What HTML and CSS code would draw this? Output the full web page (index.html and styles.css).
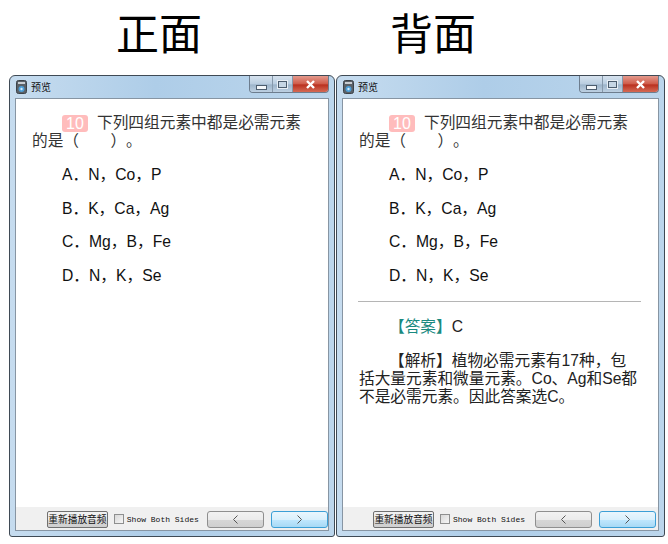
FILE: index.html
```html
<!DOCTYPE html>
<html lang="zh-CN">
<head>
    <meta charset="UTF-8">
    <meta name="viewport" content="width=device-width, initial-scale=1.0">
    <title>预览 - 正面 / 背面</title>
    <link rel="stylesheet" href="styles.css">
</head>
<body>
    <div class="page">
        <section class="column">
            <h1>正面</h1>
            <div class="window">
                <div class="titlebar">
                    <svg class="app-icon" width="11" height="14" viewBox="0 0 11 14">
                        <rect x="0.5" y="0.5" width="10" height="13" rx="2" fill="#5a6168" stroke="#3c4248"/>
                        <rect x="2" y="2" width="7" height="2" fill="#c9ced3"/>
                        <circle cx="5.5" cy="9" r="3" fill="#4d9fd8"/>
                        <circle cx="5.5" cy="9" r="1.2" fill="#d5ecfb"/>
                    </svg>
                    <span class="window-name">预览</span>
                    <div class="controls">
                        <div class="ctl ctl-min"><span class="glyph-min"></span></div>
                        <div class="ctl ctl-max"><span class="glyph-max"></span></div>
                        <div class="ctl ctl-close">
                            <svg width="11" height="9" viewBox="0 0 11 9"><path d="M2 1 L9 8 M9 1 L2 8" stroke="#fff" stroke-width="2.4"/></svg>
                        </div>
                    </div>
                </div>
                <div class="client">
                    <div class="content">
                        <div class="question">
                            <div class="question-head"><span class="badge">10</span><span>下列四组元素中都是必需元素</span></div>
                            <div>的是（　　）。</div>
                        </div>
                        <ul class="options">
                            <li>A．N，Co，P</li>
                            <li>B．K，Ca，Ag</li>
                            <li>C．Mg，B，Fe</li>
                            <li>D．N，K，Se</li>
                        </ul>
                    </div>
                    <div class="footer">
                        <button class="btn-replay">重新播放音频</button>
                        <label class="both"><span class="check"></span>Show Both Sides</label>
                        <button class="btn-nav"><svg width="7" height="9" viewBox="0 0 7 9"><path d="M5.5 0.5 L1.5 4.5 L5.5 8.5" fill="none" stroke="#555"/></svg></button>
                        <button class="btn-nav btn-next"><svg width="7" height="9" viewBox="0 0 7 9"><path d="M1.5 0.5 L5.5 4.5 L1.5 8.5" fill="none" stroke="#555"/></svg></button>
                    </div>
                </div>
            </div>
        </section>

        <section class="column column-back">
            <h1>背面</h1>
            <div class="window">
                <div class="titlebar">
                    <svg class="app-icon" width="11" height="14" viewBox="0 0 11 14">
                        <rect x="0.5" y="0.5" width="10" height="13" rx="2" fill="#5a6168" stroke="#3c4248"/>
                        <rect x="2" y="2" width="7" height="2" fill="#c9ced3"/>
                        <circle cx="5.5" cy="9" r="3" fill="#4d9fd8"/>
                        <circle cx="5.5" cy="9" r="1.2" fill="#d5ecfb"/>
                    </svg>
                    <span class="window-name">预览</span>
                    <div class="controls">
                        <div class="ctl ctl-min"><span class="glyph-min"></span></div>
                        <div class="ctl ctl-max"><span class="glyph-max"></span></div>
                        <div class="ctl ctl-close">
                            <svg width="11" height="9" viewBox="0 0 11 9"><path d="M2 1 L9 8 M9 1 L2 8" stroke="#fff" stroke-width="2.4"/></svg>
                        </div>
                    </div>
                </div>
                <div class="client">
                    <div class="content">
                        <div class="question">
                            <div class="question-head"><span class="badge">10</span><span>下列四组元素中都是必需元素</span></div>
                            <div>的是（　　）。</div>
                        </div>
                        <ul class="options">
                            <li>A．N，Co，P</li>
                            <li>B．K，Ca，Ag</li>
                            <li>C．Mg，B，Fe</li>
                            <li>D．N，K，Se</li>
                        </ul>
                        <hr class="divider">
                        <p class="answer"><span class="answer-label">【答案】</span>C</p>
                        <p class="analysis">【解析】植物必需元素有17种，包括大量元素和微量元素。Co、Ag和Se都不是必需元素。因此答案选C。</p>
                    </div>
                    <div class="footer">
                        <button class="btn-replay">重新播放音频</button>
                        <label class="both"><span class="check"></span>Show Both Sides</label>
                        <button class="btn-nav"><svg width="7" height="9" viewBox="0 0 7 9"><path d="M5.5 0.5 L1.5 4.5 L5.5 8.5" fill="none" stroke="#555"/></svg></button>
                        <button class="btn-nav btn-next"><svg width="7" height="9" viewBox="0 0 7 9"><path d="M1.5 0.5 L5.5 4.5 L1.5 8.5" fill="none" stroke="#555"/></svg></button>
                    </div>
                </div>
            </div>
        </section>
    </div>
</body>
</html>
```

FILE: styles.css
```css
html, body {
    margin: 0;
    padding: 0;
    background-color: white;
}
body {
    font-family: "Liberation Sans", "Noto Sans CJK SC", sans-serif;
    color: #222;
    text-spacing-trim: space-all;
}
.page {
    display: flex;
    gap: 1px;
    padding-left: 9px;
    width: 657px;
    height: 544px;
}
.column {
    width: 326px;
    flex: none;
    display: flex;
    flex-direction: column;
}
.column-back {
    width: 329px;
}
h1 {
    margin: 0;
    height: 75px;
    line-height: 46px;
    padding: 8px 0 0 107px;
    box-sizing: border-box;
    font-family: "Noto Sans CJK SC", sans-serif;
    font-size: 43px;
    font-weight: 400;
    color: #000;
}
.column-back h1 {
    padding-left: 54px;
}
.window {
    height: 462px;
    box-sizing: border-box;
    border: 1px solid #3f4a55;
    border-radius: 6px 6px 3px 3px;
    background: linear-gradient(90deg, #c6dcef 0%, #aecde8 45%, #bcd6ec 100%);
    display: flex;
    flex-direction: column;
    padding: 0 5px 5px;
}
.titlebar {
    height: 22px;
    flex: none;
    display: flex;
    align-items: flex-start;
}
.app-icon {
    margin: 4px 0 0 1px;
}
.window-name {
    margin: 4px 0 0 4px;
    font-family: "Noto Sans CJK SC", sans-serif;
    font-size: 10px;
    line-height: 14px;
    color: #111;
}
.controls {
    margin-left: auto;
    display: flex;
    height: 16px;
    border: 1px solid #6d7d8e;
    border-top: none;
    border-radius: 0 0 4px 4px;
    overflow: hidden;
}
.ctl {
    display: flex;
    align-items: center;
    justify-content: center;
    height: 16px;
    background: linear-gradient(#d6e2ee, #b9cde0 50%, #9db4ca 55%, #bdd0e2);
}
.ctl-min {
    width: 22px;
    border-right: 1px solid #8698aa;
}
.ctl-max {
    width: 19px;
    border-right: 1px solid #8698aa;
}
.ctl-close {
    width: 35px;
    background: linear-gradient(#e49a8d, #cf5a48 50%, #b9301f 55%, #d56a55);
}
.glyph-min {
    width: 9px;
    height: 3px;
    margin-top: 6px;
    background-color: #f4f7fa;
    border: 1px solid #4d5d6e;
}
.glyph-max {
    width: 7px;
    height: 5px;
    border: 1px solid #4d5d6e;
    outline: 1px solid #e8eef4;
    background-color: #c7d6e4;
}
.client {
    flex: 1;
    display: flex;
    flex-direction: column;
    background-color: white;
    border: 1px solid #8795a3;
    min-height: 0;
}
.content {
    flex: 1;
    padding: 15px 16px 0;
    font-size: 15.7px;
    line-height: 18px;
}
.column-back .content {
    padding-right: 17px;
}
.question {
    color: #333;
}
.question-head {
    display: flex;
    align-items: center;
    gap: 9px;
    padding-left: 30px;
}
.badge {
    width: 26px;
    height: 17px;
    line-height: 17px;
    text-align: center;
    background-color: #ffbcbc;
    color: white;
    border-radius: 3px;
    font-size: 16px;
}
.options {
    list-style: none;
    margin: 16px 0 0;
    padding: 0 0 0 30px;
    color: #111;
}
.options li {
    height: 18px;
    margin-bottom: 15.7px;
}
.divider {
    border: none;
    border-top: 1px solid #b5b5b5;
    margin: 5px 0 0 -1px;
}
.answer {
    margin: 16px 0 0;
    text-indent: 30px;
}
.answer-label {
    color: #1a8a80;
}
.analysis {
    margin: 16px 0 0;
    text-indent: 30px;
    color: #222;
}
.footer {
    height: 23px;
    flex: none;
    box-sizing: border-box;
    background-color: #f0f0f0;
    display: flex;
    align-items: center;
    padding: 1px 0 0 31px;
}
.column-back .footer {
    padding-left: 30px;
}
button {
    font-family: inherit;
    padding: 0;
    margin: 0;
    cursor: pointer;
}
.btn-replay {
    width: 61px;
    height: 17px;
    font-family: "Noto Sans CJK SC", sans-serif;
    font-size: 9.7px;
    line-height: 15px;
    white-space: nowrap;
    color: #111;
    border: 1px solid #707070;
    border-radius: 2px;
    background: linear-gradient(#f2f2f2, #ebebeb 50%, #d6d6d6 55%, #cfcfcf);
}
.both {
    display: flex;
    align-items: center;
    margin-left: 6px;
    width: 94px;
    font-family: "Liberation Mono", monospace;
    font-size: 8px;
    white-space: nowrap;
    color: #111;
}
.column-back .both {
    width: 95px;
}
.check {
    width: 8px;
    height: 8px;
    margin-right: 3px;
    border: 1px solid #8e8f8f;
    background: linear-gradient(135deg, #d8d8d8, #f6f6f6);
}
.btn-nav {
    width: 57px;
    height: 17px;
    display: flex;
    align-items: center;
    justify-content: center;
    border: 1px solid #8f8f8f;
    border-radius: 3px;
    background: linear-gradient(#f2f2f2, #ebebeb 50%, #d6d6d6 55%, #cfcfcf);
}
.btn-next {
    margin-left: 7px;
    border-color: #3c9fd6;
    background: linear-gradient(#eaf6fd, #d9f0fc 50%, #bee6fd 55%, #a7d9f5);
}
```
